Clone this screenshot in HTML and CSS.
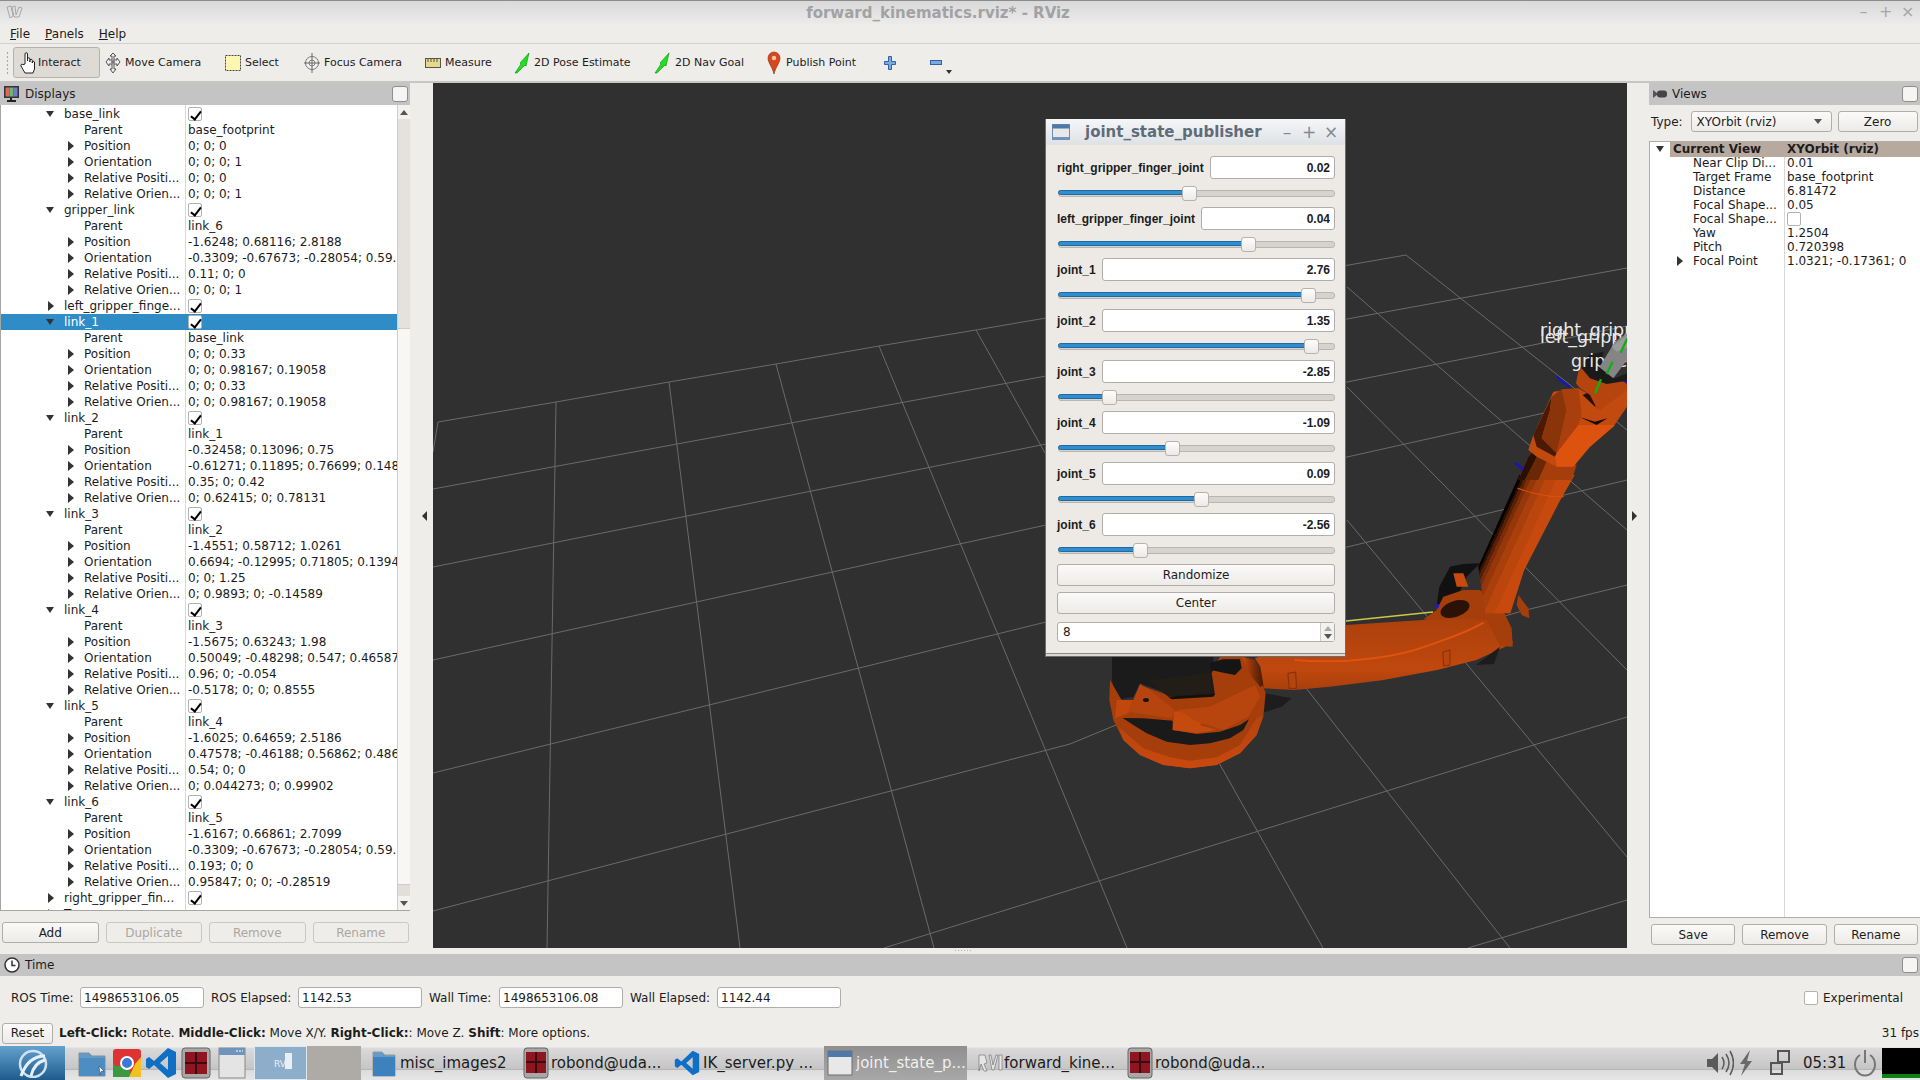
FILE: index.html
```html
<!DOCTYPE html>
<html lang="en">
<head>
<meta charset="utf-8">
<title>forward_kinematics.rviz* - RViz</title>
<link rel="stylesheet" href="styles.css">
</head>
<body>
<div class="screen">
  <header class="titlebar">
    <svg class="app-glyph" width="18" height="14" viewBox="0 0 18 14"><path d="M1 2l4-1 2 10-3 2zM6 2l3-1 1 9 3-8 3 1-3 9h-5z" fill="none" stroke="#a8a8a8"/></svg>
    <span class="title-text">forward_kinematics.rviz* - RViz</span>
    <div class="win-btns"><span>–</span><span>+</span><span>×</span></div>
  </header>
  <nav class="menubar"><span><u>F</u>ile</span><span><u>P</u>anels</span><span><u>H</u>elp</span></nav>
  <div class="toolbar">
    <div class="grip"></div>
    <div class="tool tool-on w-interact">
      <svg width="18" height="24" viewBox="0 0 18 24"><path d="M6 13V3a1.2 1.2 0 0 1 2.5 0v7V8a1.2 1.2 0 0 1 2.4 0v3-1.500a1.200 1.200 0 0 1 2.400 0V12v-1a1.200 1.200 0 0 1 2.200 0v7l-1.500 4H6l-4-7c-.6-1.400 1-2.500 2-1.300z" fill="#fff" stroke="#222"/></svg>
      <span>Interact</span>
    </div>
    <div class="tool w-move">
      <svg width="16" height="22" viewBox="0 0 16 22"><path d="M8 1l3 3H9v4h3V6l3 4-3 4v-2H9v5h2l-3 4-3-4h2v-5H4v2l-3-4 3-4v2h3V4H5z" fill="#eee" stroke="#555"/><circle cx="8" cy="10" r="2" fill="#777"/></svg>
      <span>Move Camera</span>
    </div>
    <div class="tool w-select">
      <svg width="16" height="16" viewBox="0 0 16 16"><rect x=".5" y=".5" width="15" height="15" fill="#fdf6b0" stroke="#444" stroke-dasharray="2 1"/></svg>
      <span>Select</span>
    </div>
    <div class="tool w-focus">
      <svg width="16" height="22" viewBox="0 0 16 22"><circle cx="8" cy="11" r="6.500" fill="#f2f2f2" stroke="#777"/><circle cx="8" cy="11" r="3" fill="none" stroke="#888"/><path d="M8 1v20M0 11h16" stroke="#666"/></svg>
      <span>Focus Camera</span>
    </div>
    <div class="tool w-measure">
      <svg width="16" height="10" viewBox="0 0 16 10"><rect x=".5" y=".5" width="15" height="9" fill="#e8d88a" stroke="#555"/><path d="M3 1v3M6 1v3M9 1v3M12 1v3" stroke="#555"/></svg>
      <span>Measure</span>
    </div>
    <div class="tool w-pose">
      <svg width="16" height="22" viewBox="0 0 16 22"><path d="M1 21l6-9-1-1 9-10-3 13-1-1-8 8z" fill="#1fe01f" stroke="#0a8a0a" stroke-width=".6"/></svg>
      <span>2D Pose Estimate</span>
    </div>
    <div class="tool w-nav">
      <svg width="16" height="22" viewBox="0 0 16 22"><path d="M1 21l6-9-1-1 9-10-3 13-1-1-8 8z" fill="#1fe01f" stroke="#0a8a0a" stroke-width=".6"/></svg>
      <span>2D Nav Goal</span>
    </div>
    <div class="tool w-point">
      <svg width="14" height="24" viewBox="0 0 14 24"><path d="M7 23C5 15 1 12 1 7a6 6 0 0 1 12 0c0 5-4 8-6 16z" fill="#d8461c" stroke="#8a2a10" stroke-width=".6"/><circle cx="7" cy="7" r="2.200" fill="#f6c4a8"/></svg>
      <span>Publish Point</span>
    </div>
    <div class="tool w-plus">
      <svg width="12" height="14" viewBox="0 0 12 14"><path d="M4.500 .5h3v5h4v3h-4v5h-3v-5h-4v-3h4z" fill="#7fa8dc" stroke="#2f62a8"/></svg>
    </div>
    <div class="tool w-minus">
      <svg width="12" height="6" viewBox="0 0 12 6"><rect x=".5" y=".5" width="11" height="4" fill="#7fa8dc" stroke="#2f62a8"/></svg>
      <i class="more-arrow"></i>
    </div>
  </div>

  <main class="workspace">
    <section class="left-dock">
      <div class="dock-head">
        <svg width="18" height="18" viewBox="0 0 18 18"><rect x="1" y="1" width="15" height="12" fill="#333"/><rect x="2.500" y="2.500" width="4" height="9" fill="#d66"/><rect x="6.500" y="2.500" width="4" height="9" fill="#6b6"/><rect x="10.500" y="2.500" width="4" height="9" fill="#77c"/><path d="M8 13v2M4 16h9" stroke="#222" stroke-width="2"/></svg>
        <span>Displays</span>
        <i class="dock-float"></i>
      </div>
      <div class="tree-box">
        <div class="tree">
          <div class="row g"><i class="ad"></i><span class="n">base_link</span><span class="v"><i class="cb on"></i></span></div>
          <div class="row c"><span class="n">Parent</span><span class="v">base_footprint</span></div>
          <div class="row c"><i class="ar"></i><span class="n">Position</span><span class="v">0; 0; 0</span></div>
          <div class="row c"><i class="ar"></i><span class="n">Orientation</span><span class="v">0; 0; 0; 1</span></div>
          <div class="row c"><i class="ar"></i><span class="n">Relative Positi...</span><span class="v">0; 0; 0</span></div>
          <div class="row c"><i class="ar"></i><span class="n">Relative Orien...</span><span class="v">0; 0; 0; 1</span></div>

          <div class="row g"><i class="ad"></i><span class="n">gripper_link</span><span class="v"><i class="cb on"></i></span></div>
          <div class="row c"><span class="n">Parent</span><span class="v">link_6</span></div>
          <div class="row c"><i class="ar"></i><span class="n">Position</span><span class="v">-1.6248; 0.68116; 2.8188</span></div>
          <div class="row c"><i class="ar"></i><span class="n">Orientation</span><span class="v">-0.3309; -0.67673; -0.28054; 0.59...</span></div>
          <div class="row c"><i class="ar"></i><span class="n">Relative Positi...</span><span class="v">0.11; 0; 0</span></div>
          <div class="row c"><i class="ar"></i><span class="n">Relative Orien...</span><span class="v">0; 0; 0; 1</span></div>

          <div class="row g"><i class="ar"></i><span class="n">left_gripper_finge...</span><span class="v"><i class="cb on"></i></span></div>

          <div class="row g sel"><i class="ad"></i><span class="n">link_1</span><span class="v"><i class="cb on"></i></span></div>
          <div class="row c"><span class="n">Parent</span><span class="v">base_link</span></div>
          <div class="row c"><i class="ar"></i><span class="n">Position</span><span class="v">0; 0; 0.33</span></div>
          <div class="row c"><i class="ar"></i><span class="n">Orientation</span><span class="v">0; 0; 0.98167; 0.19058</span></div>
          <div class="row c"><i class="ar"></i><span class="n">Relative Positi...</span><span class="v">0; 0; 0.33</span></div>
          <div class="row c"><i class="ar"></i><span class="n">Relative Orien...</span><span class="v">0; 0; 0.98167; 0.19058</span></div>

          <div class="row g"><i class="ad"></i><span class="n">link_2</span><span class="v"><i class="cb on"></i></span></div>
          <div class="row c"><span class="n">Parent</span><span class="v">link_1</span></div>
          <div class="row c"><i class="ar"></i><span class="n">Position</span><span class="v">-0.32458; 0.13096; 0.75</span></div>
          <div class="row c"><i class="ar"></i><span class="n">Orientation</span><span class="v">-0.61271; 0.11895; 0.76699; 0.148</span></div>
          <div class="row c"><i class="ar"></i><span class="n">Relative Positi...</span><span class="v">0.35; 0; 0.42</span></div>
          <div class="row c"><i class="ar"></i><span class="n">Relative Orien...</span><span class="v">0; 0.62415; 0; 0.78131</span></div>

          <div class="row g"><i class="ad"></i><span class="n">link_3</span><span class="v"><i class="cb on"></i></span></div>
          <div class="row c"><span class="n">Parent</span><span class="v">link_2</span></div>
          <div class="row c"><i class="ar"></i><span class="n">Position</span><span class="v">-1.4551; 0.58712; 1.0261</span></div>
          <div class="row c"><i class="ar"></i><span class="n">Orientation</span><span class="v">0.6694; -0.12995; 0.71805; 0.1394</span></div>
          <div class="row c"><i class="ar"></i><span class="n">Relative Positi...</span><span class="v">0; 0; 1.25</span></div>
          <div class="row c"><i class="ar"></i><span class="n">Relative Orien...</span><span class="v">0; 0.9893; 0; -0.14589</span></div>

          <div class="row g"><i class="ad"></i><span class="n">link_4</span><span class="v"><i class="cb on"></i></span></div>
          <div class="row c"><span class="n">Parent</span><span class="v">link_3</span></div>
          <div class="row c"><i class="ar"></i><span class="n">Position</span><span class="v">-1.5675; 0.63243; 1.98</span></div>
          <div class="row c"><i class="ar"></i><span class="n">Orientation</span><span class="v">0.50049; -0.48298; 0.547; 0.46587</span></div>
          <div class="row c"><i class="ar"></i><span class="n">Relative Positi...</span><span class="v">0.96; 0; -0.054</span></div>
          <div class="row c"><i class="ar"></i><span class="n">Relative Orien...</span><span class="v">-0.5178; 0; 0; 0.8555</span></div>

          <div class="row g"><i class="ad"></i><span class="n">link_5</span><span class="v"><i class="cb on"></i></span></div>
          <div class="row c"><span class="n">Parent</span><span class="v">link_4</span></div>
          <div class="row c"><i class="ar"></i><span class="n">Position</span><span class="v">-1.6025; 0.64659; 2.5186</span></div>
          <div class="row c"><i class="ar"></i><span class="n">Orientation</span><span class="v">0.47578; -0.46188; 0.56862; 0.486</span></div>
          <div class="row c"><i class="ar"></i><span class="n">Relative Positi...</span><span class="v">0.54; 0; 0</span></div>
          <div class="row c"><i class="ar"></i><span class="n">Relative Orien...</span><span class="v">0; 0.044273; 0; 0.99902</span></div>

          <div class="row g"><i class="ad"></i><span class="n">link_6</span><span class="v"><i class="cb on"></i></span></div>
          <div class="row c"><span class="n">Parent</span><span class="v">link_5</span></div>
          <div class="row c"><i class="ar"></i><span class="n">Position</span><span class="v">-1.6167; 0.66861; 2.7099</span></div>
          <div class="row c"><i class="ar"></i><span class="n">Orientation</span><span class="v">-0.3309; -0.67673; -0.28054; 0.59...</span></div>
          <div class="row c"><i class="ar"></i><span class="n">Relative Positi...</span><span class="v">0.193; 0; 0</span></div>
          <div class="row c"><i class="ar"></i><span class="n">Relative Orien...</span><span class="v">0.95847; 0; 0; -0.28519</span></div>

          <div class="row g"><i class="ar"></i><span class="n">right_gripper_fin...</span><span class="v"><i class="cb on"></i></span></div>
          <div class="row g"><i class="ar"></i><span class="n">Tree</span><span class="v"></span></div>
        </div>
        <div class="vscroll">
          <div class="sb-btn"><i class="up"></i></div>
          <div class="sb-a"></div>
          <div class="sb-b"></div>
          <div class="sb-c"></div>
          <div class="sb-btn"><i class="down"></i></div>
        </div>
      </div>
      <div class="dock-btns">
        <button class="btn">Add</button>
        <button class="btn off">Duplicate</button>
        <button class="btn off">Remove</button>
        <button class="btn off">Rename</button>
      </div>
    </section>

    <div class="collapse c-left"><i class="tri-left"></i></div>

    <div class="viewport">
      <svg class="scene" viewBox="433 83 1194 865" width="1194" height="865">
        <defs>
          <linearGradient id="upper" gradientUnits="userSpaceOnUse" x1="1180" y1="650" x2="1294" y2="699">
            <stop offset="0" stop-color="#080302"/><stop offset=".05" stop-color="#080302"/>
            <stop offset=".05" stop-color="#2d1103"/><stop offset=".1" stop-color="#2d1103"/>
            <stop offset=".1" stop-color="#572006"/><stop offset=".17" stop-color="#572006"/>
            <stop offset=".17" stop-color="#7a2d08"/><stop offset=".25" stop-color="#7a2d08"/>
            <stop offset=".25" stop-color="#95370a"/><stop offset=".38" stop-color="#95370a"/>
            <stop offset=".38" stop-color="#a93f0b"/><stop offset=".55" stop-color="#a93f0b"/>
            <stop offset=".55" stop-color="#ba450d"/><stop offset=".78" stop-color="#ba450d"/>
            <stop offset=".78" stop-color="#c8490e"/><stop offset="1" stop-color="#c8490e"/>
          </linearGradient>
          <linearGradient id="lower" gradientUnits="userSpaceOnUse" x1="0" y1="960" x2="0" y2="1170">
            <stop offset="0" stop-color="#ad410c"/><stop offset=".45" stop-color="#b8450d"/>
            <stop offset=".7" stop-color="#c0480d"/><stop offset="1" stop-color="#a83f0c"/>
          </linearGradient>
          <linearGradient id="rim" x1="0" y1="0" x2="0" y2="1">
            <stop offset="0" stop-color="#b5440e"/><stop offset="1" stop-color="#c8490e"/>
          </linearGradient>
          <linearGradient id="strip" x1="0" y1="0" x2="1" y2="0">
            <stop offset="0" stop-color="#c8490e"/><stop offset="1" stop-color="#2e1104"/>
          </linearGradient>
        </defs>
        <g class="grid">
          <polyline points="433,452 438,422 556,402 669,382 776,364 879,346 976,330 1046,318 1406,255"/>
          <polyline points="433,489 1046,376 1347,319 1451,300 1627,268"/>
          <polyline points="433,567 1046,444 1347,382 1523,347 1627,326"/>
          <polyline points="433,660 1046,525 1347,457 1544,413 1627,394"/>
          <polyline points="433,773 1046,622 1347,547 1627,480"/>
          <polyline points="433,911 1070,744 1116,725 1526,610 1627,585"/>
          <polyline points="884,948 1070,890 1358,800 1537,744 1627,717"/>
          <polyline points="1468,948 1627,900"/>
          <polyline points="556,402 547,948"/>
          <polyline points="669,382 740,948"/>
          <polyline points="776,364 934,948"/>
          <polyline points="879,346 1127,948"/>
          <polyline points="976,330 1323,948"/>
          <polyline points="1080,400 1510,948"/>
          <polyline points="1347,520 1627,857"/>
          <polyline points="1347,387 1627,670"/>
          <polyline points="1347,287 1627,530"/>
          <polyline points="1406,255 1627,430"/>
        </g>

        <!-- base disc -->
        <g transform="translate(1100 650) scale(.33333)">
          <path d="M495 130L575 145L545 170L485 190Z" fill="#1d1d1d"/>
          <path d="M36 20H340L345 135L230 140L120 100L100 140L50 150L36 90Z" fill="#1b1b1b"/>
          <path d="M30 90L28 150L40 210L70 270L120 315L190 345L270 355L350 345L420 310L470 255L490 200L497 130L480 80L460 30L430 20H360L335 70L345 135L230 145L120 105L85 185Z" fill="#a53e0b"/>
          <path d="M55 230L130 295L210 322L270 332L350 322L420 285L470 205L490 195L470 255L420 310L350 345L270 355L190 345L120 315L70 270Z" fill="url(#rim)"/>
          <path d="M50 150L100 150L85 190L45 205Z" fill="#c0480d"/>
          <path d="M68 204L130 205L218 212L218 240L290 252L360 245L420 225L447 208L430 240L390 265L330 280L270 285L200 275L140 250L100 225Z" fill="#1a1a1a"/>
          <path d="M120 102L85 185L215 205L224 180L150 120Z" fill="#b5440e"/>
          <ellipse cx="138" cy="150" rx="9" ry="6" fill="#1c1008"/>
          <path d="M222 185L270 180L330 190L300 225L350 240L290 250L218 240Z" fill="#c44a0e"/>
          <path d="M235 180L330 170L465 105L480 140L445 200L370 240L290 215Z" fill="#b8450d"/>
          <path d="M145 90L330 68L336 128L205 140Z" fill="#231d17"/>
          <path d="M205 140L345 132L340 140L215 148Z" fill="#150f0a"/>
          <path d="M330 40L368 28H420L425 55L405 75L370 68L332 60Z" fill="#151515"/>
          <path d="M425 22L465 30L502 92L482 112L455 80Z" fill="url(#strip)"/>
        </g>

        <!-- lower arm -->
        <g transform="translate(1080 300) scale(.35714 .33333)">
          <path d="M490 1075L746 975L960 960L1030 950L1130 935L1170 935L1200 980L1212 1030L1110 1080L1000 1110L850 1140L700 1160L600 1170L515 1165L505 1100Z" fill="url(#lower)"/>
          <path d="M600 1080C760 1095 900 1065 960 1042S1070 1005 1130 968" fill="none" stroke="#de5310" stroke-width="6"/>
          <path d="M582 1120L604 1116L606 1165L586 1165Z" fill="#b5440e" stroke="#6a2807" stroke-width="2"/>
          <path d="M1016 1056L1036 1050L1036 1095L1018 1098Z" fill="#b8450d" stroke="#6a2807" stroke-width="2"/>
        </g>

        <!-- elbow hub -->
        <g transform="translate(1400 540) scale(.33333)">
          <path d="M300 320L282 372L228 375Z" fill="#1c1c1c"/>
          <path d="M118 140L150 80L190 72L240 70L200 110L170 175L110 195Z" fill="#111"/>
          <path d="M160 100L190 100L205 140L170 140Z" fill="#c84a0e"/>
          <path d="M355 165L385 205L388 235L365 225L350 195Z" fill="#a53e0b"/>
          <path d="M70 238L110 210L130 170L190 150L240 150L310 212L335 265L338 320L300 318L260 240L170 235L100 240Z" fill="#a53e0b"/>
          <ellipse cx="165" cy="207" rx="45" ry="24" transform="rotate(-18 165 207)" fill="#2a1206"/>
          <circle cx="112" cy="197" r="6" fill="#1a1ad0"/>
        </g>
        <path class="laser" d="M1346 621L1433 612"/>

        <!-- forearm -->
        <g transform="translate(1080 300) scale(.35714 .33333)">
          <path d="M1115 800L1230 525L1385 525L1340 610L1243 812L1205 940L1135 940Z" fill="url(#upper)"/>
          <path d="M1225 565Q1300 592 1355 590" fill="none" stroke="#d8520f" stroke-width="3"/>
        </g>

        <!-- wrist -->
        <g transform="translate(1500 310) scale(.33333)">
          <path d="M85 440L100 425L230 465L215 510L55 510Z" fill="#a53e0b"/>
          <path d="M85 440L100 425L115 432L75 510H55Z" fill="#2a1004"/>
          <path d="M115 432L145 442L115 510H75Z" fill="#6a2807"/>
          <path d="M85 420L100 375L160 245L235 235L270 255L290 295L340 230L381 222L381 290L340 350L270 410L240 440L220 470L170 470L110 440Z" fill="#c24a0e"/>
          <path d="M100 375L155 260L150 300L125 385L170 430L165 440L110 410Z" fill="#4a1a05"/>
          <path d="M155 260L185 238L200 300L170 430L125 385L150 300Z" fill="#8a340a"/>
          <path d="M185 238L235 235L245 310L235 345L170 430L200 300Z" fill="#a83f0c"/>
          <path d="M235 345L270 345L345 345L270 410L220 470L170 470L165 440L170 430Z" fill="#de5210"/>
          <path d="M240 322L290 345L322 325L285 335Z" fill="#1a0a03"/>
          <path d="M248 255L285 290L300 268L270 245Z" fill="#2a1004"/>
          <path d="M235 185L250 170L300 215L381 205V240L300 300L290 295L270 255L240 235L228 220Z" fill="#b5440e"/>
          <path d="M170 200L210 232M45 458L70 478M370 210L382 218" stroke="#1414d0" stroke-width="7" fill="none"/>
          <path d="M245 175L265 135L310 125L305 175L345 205L381 190V212L320 222L270 205Z" fill="#1a1a1a"/>
        </g>
        <text class="label" x="1540" y="336">right_gripper_finger_joint</text>
        <text class="label" x="1540" y="343">left_gripper_finger_joint</text>
        <text class="label" x="1571" y="367">gripper_link</text>
        <g transform="translate(1500 310) scale(.33333)">
          <path d="M298 172L345 95L381 70V150L340 205Z" fill="#858585"/>
          <path d="M335 110L381 75V112L350 125Z" fill="#9b9b9b"/>
          <path d="M285 250L303 208M320 192L338 155M362 128L382 85" stroke="#10b010" stroke-width="7" fill="none"/>
        </g>
      </svg>
      <i class="vp-grip"></i>
    </div>

    <div class="collapse c-right"><i class="tri-right"></i></div>

    <section class="right-dock">
      <div class="dock-head">
        <svg width="16" height="12" viewBox="0 0 16 12"><path d="M1 2l4 3v2l-4 3z" fill="#555"/><rect x="5" y="2.500" width="10" height="7" rx="3" fill="#444"/></svg>
        <span>Views</span>
        <i class="dock-float"></i>
      </div>
      <div class="type-row">
        <span>Type:</span>
        <div class="combo"><span>XYOrbit (rviz)</span><i class="down"></i></div>
        <button class="btn zero">Zero</button>
      </div>
      <div class="view-tree">
        <div class="vrow head"><i class="ad"></i><b class="vn">Current View</b><b class="vv">XYOrbit (rviz)</b></div>
        <div class="vrow"><span class="vn">Near Clip Di...</span><span class="vv">0.01</span></div>
        <div class="vrow"><span class="vn">Target Frame</span><span class="vv">base_footprint</span></div>
        <div class="vrow"><span class="vn">Distance</span><span class="vv">6.81472</span></div>
        <div class="vrow"><span class="vn">Focal Shape...</span><span class="vv">0.05</span></div>
        <div class="vrow"><span class="vn">Focal Shape...</span><span class="vv"><i class="cb"></i></span></div>
        <div class="vrow"><span class="vn">Yaw</span><span class="vv">1.2504</span></div>
        <div class="vrow"><span class="vn">Pitch</span><span class="vv">0.720398</span></div>
        <div class="vrow"><i class="ar"></i><span class="vn">Focal Point</span><span class="vv">1.0321; -0.17361; 0</span></div>
      </div>
      <div class="view-btns">
        <button class="btn">Save</button>
        <button class="btn">Remove</button>
        <button class="btn">Rename</button>
      </div>
    </section>
  </main>

  <section class="time-panel">
    <div class="dock-head">
      <svg width="18" height="18" viewBox="0 0 18 18"><circle cx="9" cy="9" r="7" fill="#fff" stroke="#333" stroke-width="1.500"/><path d="M9 4.500V9.500H12.500" fill="none" stroke="#333" stroke-width="1.500"/></svg>
      <span>Time</span>
      <i class="dock-float"></i>
    </div>
    <div class="time-row">
      <label class="lab-a">ROS Time:</label><input class="field" value="1498653106.05" readonly>
      <label class="lab-b">ROS Elapsed:</label><input class="field" value="1142.53" readonly>
      <label class="lab-c">Wall Time:</label><input class="field" value="1498653106.08" readonly>
      <label class="lab-b">Wall Elapsed:</label><input class="field" value="1142.44" readonly>
      <div class="spacer"></div>
      <i class="cb"></i><label class="exp">Experimental</label>
    </div>
    <div class="help-row">
      <button class="btn reset">Reset</button>
      <p class="help"><b>Left-Click:</b> Rotate. <b>Middle-Click:</b> Move X/Y. <b>Right-Click:</b>: Move Z. <b>Shift</b>: More options.</p>
      <span class="fps">31 fps</span>
    </div>
  </section>

  <footer class="taskbar">
    <div class="start"><svg width="34" height="30" viewBox="0 0 34 30"><circle cx="17" cy="16" r="13" fill="none" stroke="#cfe2f0" stroke-width="2.500"/><path d="M5 28C10 14 18 8 29 8M15 28c2-9 6-14 14-16" fill="none" stroke="#e6f0f8" stroke-width="3"/></svg></div>
    <div class="launch l-folder"><svg width="30" height="30" viewBox="0 0 30 30"><path d="M2 5h10l3 3h13v20H2z" fill="#5f9ccb" stroke="#8d8d8d"/><rect x="2" y="10" width="26" height="18" fill="#4d8dc2"/><path d="M22 18l5 5-3 .5-1 3z" fill="#fff" stroke="#333" stroke-width=".5"/></svg></div>
    <div class="launch l-chrome"><svg width="28" height="30" viewBox="0 0 28 30"><rect x="0" y="1" width="28" height="28" rx="3" fill="#d33"/><path d="M0 14L8 29H0z" fill="#3a9a3f"/><path d="M0 18l8 11h12L14 18z" fill="#3a9a3f"/><path d="M28 9v20H16l6-13z" fill="#f4c020"/><circle cx="14" cy="15" r="6" fill="#3b78d8" stroke="#fff" stroke-width="2"/></svg></div>
    <div class="launch l-code"><svg width="32" height="32" viewBox="0 0 32 32"><path d="M23 1l8 4v22l-8 4L9 18l-5 4-3-2v-8l3-2 5 4zM23 9l-8 7 8 7z" fill="#0f6fc4"/></svg></div>
    <div class="launch l-term"><svg width="30" height="32" viewBox="0 0 30 32"><rect x="1" y="1" width="28" height="30" rx="3" fill="#a8a8a8" stroke="#666"/><rect x="4" y="5" width="22" height="22" fill="#8f1520"/><path d="M15 5v22M4 16h22" stroke="#3a0a10" stroke-width="2"/></svg></div>
    <div class="launch l-win"><svg width="28" height="32" viewBox="0 0 28 32"><rect x="1" y="1" width="26" height="30" fill="#e4e4e4" stroke="#888"/><rect x="1" y="1" width="26" height="7" fill="#6f95bd"/><path d="M18 4h7" stroke="#fff" stroke-dasharray="2 1"/></svg></div>
    <div class="pager">
      <div class="desk one"><span class="rv">RV</span><i class="mini"></i></div>
      <div class="desk two"></div>
    </div>
    <div class="task t1"><svg width="24" height="28" viewBox="0 0 24 28"><path d="M1 3h9l3 3h10v21H1z" fill="#5f9ccb" stroke="#999"/><rect x="1" y="8" width="22" height="19" fill="#3d82bc"/></svg><span>misc_images2</span></div>
    <div class="task t2"><svg width="26" height="32" viewBox="0 0 26 32"><rect x="1" y="1" width="24" height="30" rx="3" fill="#a8a8a8" stroke="#666"/><rect x="3" y="5" width="20" height="21" fill="#8f1520"/><path d="M13 5v21M3 15h20" stroke="#3a0a10" stroke-width="2"/></svg><span>robond@uda...</span></div>
    <div class="task t3"><svg width="26" height="30" viewBox="0 0 32 32"><path d="M23 1l8 4v22l-8 4L9 18l-5 4-3-2v-8l3-2 5 4zM23 9l-8 7 8 7z" fill="#0f6fc4"/></svg><span>IK_server.py ...</span></div>
    <div class="task t4 active"><svg width="26" height="26" viewBox="0 0 26 26"><rect x="1" y="1" width="24" height="24" fill="#e8e8e8" stroke="#6f6f6f"/><rect x="1" y="1" width="24" height="6" fill="#4e79a8"/></svg><span>joint_state_p...</span></div>
    <div class="task t5"><svg width="26" height="20" viewBox="0 0 26 20"><path d="M2 2h6l2 8-3 1 3 7H7l-3-7-2 7zM12 2h2l2 10 3-10h2l-4 15h-2zM22 2h3v15h-3z" fill="#e6e6e6" stroke="#777" stroke-width=".7"/></svg><span>forward_kine...</span></div>
    <div class="task t6"><svg width="26" height="32" viewBox="0 0 26 32"><rect x="1" y="1" width="24" height="30" rx="3" fill="#a8a8a8" stroke="#666"/><rect x="3" y="5" width="20" height="21" fill="#8f1520"/><path d="M13 5v21M3 15h20" stroke="#3a0a10" stroke-width="2"/></svg><span>robond@uda...</span></div>
    <div class="spacer"></div>
    <div class="tray">
      <svg class="t-speaker" width="28" height="28" viewBox="0 0 28 28"><path d="M1 10h5l6-6v20l-6-6H1z" fill="#5a5a5a"/><path d="M16 8q4 6 0 12M20 5q6 9 0 18M24 2q7 12 0 24" fill="none" stroke="#5a5a5a" stroke-width="1.500"/></svg>
      <svg class="t-bolt" width="18" height="28" viewBox="0 0 18 28"><path d="M13 1L3 15h5L4 27l11-15h-5z" fill="#6a6a6a"/></svg>
      <svg class="t-net" width="20" height="26" viewBox="0 0 20 26"><rect x="8" y="1" width="11" height="11" fill="none" stroke="#555" stroke-width="2"/><rect x="1" y="13" width="11" height="11" fill="none" stroke="#555" stroke-width="2"/></svg>
      <span class="clock">05:31</span>
      <svg class="t-power" width="24" height="28" viewBox="0 0 24 28"><path d="M7 6a10 11 0 1 0 10 0" fill="none" stroke="#777" stroke-width="2"/><path d="M12 1v13" stroke="#777" stroke-width="2"/></svg>
      <div class="monitor"><i></i></div>
    </div>
  </footer>

  <aside class="dialog">
    <div class="dlg-title">
      <svg width="18" height="16" viewBox="0 0 18 16"><rect x=".5" y=".5" width="17" height="15" fill="#e8e8e8" stroke="#6f8db0"/><rect x=".5" y=".5" width="17" height="4" fill="#4e79a8"/><rect x=".5" y="13" width="17" height="2.500" fill="#6f95bd"/></svg>
      <span class="dlg-name">joint_state_publisher</span>
      <div class="dlg-btns"><span>–</span><span>+</span><span>×</span></div>
    </div>
    <div class="dlg-body">
      <div class="joint"><label>right_gripper_finger_joint</label><input class="jv" value="0.02" readonly></div>
      <div class="slider"><i class="fill" style="width:133px"></i></div>
      <div class="joint"><label>left_gripper_finger_joint</label><input class="jv" value="0.04" readonly></div>
      <div class="slider"><i class="fill" style="width:192px"></i></div>
      <div class="joint"><label>joint_1</label><input class="jv" value="2.76" readonly></div>
      <div class="slider"><i class="fill" style="width:252px"></i></div>
      <div class="joint"><label>joint_2</label><input class="jv" value="1.35" readonly></div>
      <div class="slider"><i class="fill" style="width:255px"></i></div>
      <div class="joint"><label>joint_3</label><input class="jv" value="-2.85" readonly></div>
      <div class="slider"><i class="fill" style="width:53px"></i></div>
      <div class="joint"><label>joint_4</label><input class="jv" value="-1.09" readonly></div>
      <div class="slider"><i class="fill" style="width:116px"></i></div>
      <div class="joint"><label>joint_5</label><input class="jv" value="0.09" readonly></div>
      <div class="slider"><i class="fill" style="width:145px"></i></div>
      <div class="joint"><label>joint_6</label><input class="jv" value="-2.56" readonly></div>
      <div class="slider"><i class="fill" style="width:84px"></i></div>
      <button class="btn wide">Randomize</button>
      <button class="btn wide">Center</button>
      <div class="spin"><span>8</span><div class="spin-arrows"><i class="up"></i><i class="down"></i></div></div>
    </div>
    <div class="dlg-foot"></div>
  </aside>
</div>
</body>
</html>
```
FILE: styles.css
```css
* { box-sizing: border-box; }
html, body { margin: 0; padding: 0; }
body { width: 1920px; height: 1080px; overflow: hidden; background: #efede9; font: 12px/16px "DejaVu Sans", sans-serif; color: #1c1c1c; }
.screen { position: relative; width: 1920px; height: 1080px; display: flex; flex-direction: column; overflow: hidden; }
i { display: block; font-style: normal; }
svg { display: block; flex: none; }

.titlebar { height: 25px; flex: none; display: flex; align-items: center; justify-content: center; position: relative; border-top: 1px solid #8c8c8c; background: linear-gradient(#d9d9d9, #ececec); }
.app-glyph { position: absolute; left: 6px; top: 4px; }
.title-text { font-weight: bold; font-size: 15px; color: #a2a2a2; margin-left: -44px; }
.win-btns { position: absolute; right: 6px; top: 1px; display: flex; gap: 9px; color: #a6a6a6; font-size: 16px; line-height: 20px; }
.win-btns span { width: 13px; text-align: center; }

.menubar { height: 18px; flex: none; display: flex; gap: 15px; padding-left: 10px; align-items: center; background: #efede9; }

.toolbar { height: 40px; flex: none; display: flex; align-items: center; padding-left: 6px; background: #efede9; border-top: 1px solid #d5d2cd; border-bottom: 2px solid #c8c6c2; font-size: 11px; }
.grip { width: 3px; height: 24px; margin-right: 4px; background: radial-gradient(circle, #aaa 40%, transparent 45%) 0 0 / 3px 4px; }
.tool { display: flex; align-items: center; gap: 4px; height: 31px; flex: none; position: relative; }
.tool-on { background: #dedbd6; border: 1px solid #b4b2ae; border-radius: 3px; padding-left: 5px; gap: 1px; }
.w-interact { width: 87px; margin-right: 5px; }
.w-move { width: 120px; }
.w-select { width: 79px; }
.w-focus { width: 121px; }
.w-measure { width: 89px; }
.w-pose { width: 140px; }
.w-nav { width: 113px; gap: 5px; }
.w-point { width: 117px; gap: 5px; }
.w-plus { width: 46px; }
.w-minus { width: 30px; }
.more-arrow { position: absolute; left: 16px; top: 23px; border: 3.500px solid transparent; border-top: 4px solid #333; border-bottom: 0; }

.workspace { flex: 1; display: flex; min-height: 0; }
.dock-head { height: 22px; flex: none; display: flex; align-items: center; gap: 4px; padding-left: 3px; background: #c4c4c4; position: relative; }
.dock-float { position: absolute; right: 2px; top: 3px; width: 16px; height: 16px; border: 1px solid #8e8e8e; border-radius: 3px; background: #f6f5f3; }

.left-dock { width: 410px; flex: none; display: flex; flex-direction: column; }
.tree-box { height: 806px; flex: none; display: flex; border-left: 1px solid #a8a6a2; border-bottom: 1px solid #a8a6a2; background: #fff; }
.tree { width: 396px; flex: none; overflow: hidden; padding-top: 1px; background: linear-gradient(#d8d8d8, #d8d8d8) 184px 0 / 1px 100% no-repeat #fff; }
.row { height: 16px; display: flex; align-items: center; position: relative; white-space: nowrap; }
.row .n { position: absolute; white-space: nowrap; }
.row.g .n { left: 63px; }
.row.c .n { left: 83px; }
.row .v { position: absolute; left: 187px; width: 209px; overflow: hidden; white-space: nowrap; }
.row.sel { background: #308cc6; }
.row.sel .n { color: #fff; }
.row.g > .ad { position: absolute; left: 45px; top: 5px; }
.row.c > .ar { position: absolute; left: 67px; top: 3px; }
.ad { width: 0; height: 0; border-left: 4.500px solid transparent; border-right: 4.500px solid transparent; border-top: 6px solid #333; }
.ar { width: 0; height: 0; border-top: 5px solid transparent; border-bottom: 5px solid transparent; border-left: 6px solid #333; }
.row.g > .ar { position: absolute; left: 47px; top: 3px; }
.cb { width: 14px; height: 14px; border: 1px solid #b4b2ae; border-radius: 2px; background: #fff; position: relative; flex: none; }
.cb.on::after { content: ""; position: absolute; left: 4px; top: 1px; width: 4px; height: 9px; border-right: 2px solid #000; border-bottom: 2px solid #000; transform: rotate(38deg); }

.vscroll { flex: 1; display: flex; flex-direction: column; border-left: 1px solid #d0ceca; }
.sb-btn { height: 14px; flex: none; display: flex; align-items: center; justify-content: center; background: #f4f2ef; }
.sb-a { height: 210px; flex: none; background: #e5e2de; border-bottom: 1px solid #cfccc8; }
.sb-b { flex: 1; background: #f8f7f5; }
.sb-c { height: 12px; flex: none; background: #e2dfda; border-top: 1px solid #cfccc8; }
.up { width: 0; height: 0; border-left: 4px solid transparent; border-right: 4px solid transparent; border-bottom: 5px solid #555; }
.down { width: 0; height: 0; border-left: 4px solid transparent; border-right: 4px solid transparent; border-top: 5px solid #555; }

.btn { font: 12px/16px "DejaVu Sans", sans-serif; color: #1c1c1c; background: linear-gradient(#fbfaf9, #ecebe8); border: 1px solid #b0aeaa; border-radius: 3px; padding: 0; height: 21px; }
.btn.off { color: #a9a7a3; background: #efede9; border-color: #cac8c4; }
.dock-btns { display: flex; gap: 7px; padding: 11px 1px 0 2px; }
.dock-btns .btn { flex: 1; }

.collapse { flex: none; display: flex; align-items: center; padding-bottom: 6px; }
.c-left { width: 23px; padding-left: 12px; }
.c-right { width: 22px; padding-left: 5px; }
.tri-left { width: 0; height: 0; border-top: 5px solid transparent; border-bottom: 5px solid transparent; border-right: 5px solid #333; }
.tri-right { width: 0; height: 0; border-top: 5px solid transparent; border-bottom: 5px solid transparent; border-left: 5px solid #333; }

.viewport { width: 1194px; height: 865px; flex: none; position: relative; background: #303030; }
.scene { position: absolute; inset: 0; overflow: hidden; }
.grid polyline { fill: none; stroke: #6a6a6a; stroke-width: 1; }
.laser { fill: none; stroke: #c8c84a; stroke-width: 1.500; }
.label { font: 17.500px "DejaVu Sans", sans-serif; fill: #e8e8e8; }
.vp-grip { position: absolute; left: 522px; top: 867px; width: 17px; height: 1px; background: repeating-linear-gradient(90deg, #b0b0b0 0 1px, transparent 1px 3px); }

.right-dock { flex: 1; min-width: 0; display: flex; flex-direction: column; }
.type-row { display: flex; align-items: center; gap: 8px; padding: 6px 2px 9px 2px; height: 36px; flex: none; }
.combo { width: 141px; height: 21px; flex: none; display: flex; align-items: center; justify-content: space-between; padding: 0 9px 0 5px; border: 1px solid #b0aeaa; border-radius: 3px; background: linear-gradient(#fbfaf9, #ecebe8); }
.btn.zero { width: 80px; margin-left: -2px; }
.view-tree { height: 777px; flex: none; border: 1px solid #b0aeaa; border-right: 0; background: linear-gradient(#d8d8d8, #d8d8d8) 134px 0 / 1px 100% no-repeat #fff; }
.vrow { height: 14px; line-height: 14px; position: relative; white-space: nowrap; }
.vrow .vn { position: absolute; left: 43px; }
.vrow .vv { position: absolute; left: 137px; }
.vrow > .ad { position: absolute; left: 6px; top: 4px; }
.vrow > .ar { position: absolute; left: 27px; top: 2px; }
.vrow.head { height: 15px; margin-bottom: -1px; line-height: 15px; background: linear-gradient(90deg, #fff 20px, #b8a99f 20px); }
.vrow.head .vn { left: 23px; }
.view-btns { display: flex; gap: 7px; padding: 6px 2px 0 2px; }
.view-btns .btn { flex: 1; }

.time-panel { height: 92px; flex: none; display: flex; flex-direction: column; }
.time-row { display: flex; align-items: center; height: 21px; margin-top: 11px; padding: 0 17px 0 11px; flex: none; }
.lab-a { width: 69px; flex: none; }
.lab-b { width: 87px; flex: none; }
.lab-c { width: 70px; flex: none; }
.field { width: 124px; height: 21px; flex: none; padding: 0 3px; margin-right: 7px; font: 12px "DejaVu Sans", sans-serif; color: #1c1c1c; border: 1px solid #b0aeaa; border-radius: 3px; background: #fff; outline: none; }
.spacer { flex: 1; }
.time-row .cb { margin-right: 5px; }
.help-row { display: flex; align-items: center; height: 20px; margin-top: 15px; padding-left: 2px; flex: none; }
.btn.reset { width: 51px; height: 21px; }
.help { margin: 0 0 0 6px; flex: 1; }
.fps { margin-right: 1px; }

.taskbar { height: 34px; flex: none; display: flex; align-items: center; background: linear-gradient(#f3f3f3 0, #d9d9d9 8%, #c6c6c6 66%, #a8a8a8 68%, #dcdcdc 72%, #e6e6e6 100%); font-size: 15px; }
.start { width: 65px; height: 34px; flex: none; display: flex; align-items: center; justify-content: center; background: linear-gradient(#63a2cf, #1f5c8e); }
.launch { flex: none; }
.l-folder { margin-left: 12px; }
.l-chrome { margin-left: 6px; }
.l-code { margin-left: 4px; }
.l-term { margin-left: 4px; }
.l-win { margin-left: 7px; }
.pager { display: flex; margin-left: 8px; height: 34px; flex: none; }
.desk { width: 53px; height: 34px; position: relative; }
.desk.one { background: #8daecb; border: 1px solid #dfe8f0; }
.desk.two { width: 54px; background: #aeaba6; }
.rv { position: absolute; left: 19px; top: 9px; font-size: 9px; color: #eee; }
.mini { position: absolute; left: 30px; top: 6px; width: 7px; height: 16px; background: #e8eef4; }
.task { display: flex; align-items: center; gap: 3px; height: 34px; flex: none; white-space: nowrap; position: relative; }
.t1 { margin-left: 11px; width: 151px; gap: 4px; }
.t2 { width: 151px; gap: 2px; }
.t3 { width: 150px; gap: 3px; }
.t4 { width: 143px; padding-left: 3px; gap: 3px; }
.t4.active { background: linear-gradient(#8f8f8f, #a8a8a8); color: #f0f0f0; }
.t5 { margin-left: 10px; width: 150px; gap: 1px; }
.t6 { width: 150px; gap: 2px; }
.tray { display: flex; align-items: center; height: 34px; flex: none; }
.t-bolt { margin-left: 3px; }
.t-net { margin-left: 15px; }
.clock { margin-left: 13px; width: 41px; font-size: 15px; }
.t-power { margin-left: 9px; }
.monitor { width: 38px; height: 30px; margin-left: 5px; background: #000; display: flex; align-items: flex-end; }
.monitor i { width: 100%; height: 4px; background: #0f7f1a; }

.dialog { position: absolute; left: 1045px; top: 119px; width: 301px; height: 538px; display: flex; flex-direction: column; background: #edeae6; border: 1px solid #6d6d6d; border-top: 0; }
.dlg-title { height: 26px; flex: none; display: flex; align-items: center; padding-left: 6px; position: relative; background: linear-gradient(#f4f6f8, #dfe2e5); }
.dlg-name { margin-left: 15px; font-size: 15px; font-weight: bold; color: #5f6c78; }
.dlg-btns { position: absolute; right: 7px; top: 3px; display: flex; gap: 8px; color: #808a94; font-size: 17px; line-height: 20px; }
.dlg-btns span { width: 14px; text-align: center; }
.dlg-body { flex: 1; padding: 11px 10px 0 11px; display: flex; flex-direction: column; }
.joint { display: flex; align-items: center; gap: 6px; height: 23px; flex: none; font: bold 12px "Liberation Sans", sans-serif; }
.joint label { flex: none; }
.jv { flex: 1; min-width: 0; height: 23px; padding: 0 4px; text-align: right; font: bold 12px "Liberation Sans", sans-serif; color: #1c1c1c; border: 1px solid #b0aeaa; border-radius: 3px; background: #fff; outline: none; }
.slider { height: 28px; flex: none; position: relative; }
.slider::before { content: ""; position: absolute; left: 1px; right: 0; top: 11px; height: 5px; background: #d6d3cf; border: 1px solid #b8b6b2; border-radius: 3px; }
.fill { position: absolute; left: 1px; top: 11px; height: 5px; background: #2f8dd0; border: 1px solid #1f6a9f; border-radius: 3px 0 0 3px; }
.fill::after { content: ""; position: absolute; right: -7px; top: -5px; width: 13px; height: 13px; background: linear-gradient(#fdfdfc, #eceae7); border: 1px solid #b4b2ae; border-radius: 3px; }
.btn.wide { width: 100%; height: 22px; flex: none; }
.btn.wide + .btn.wide { margin-top: 6px; }
.spin { height: 20px; flex: none; margin-top: 8px; display: flex; align-items: center; justify-content: space-between; padding-left: 5px; border: 1px solid #b0aeaa; border-radius: 3px; background: #fff; }
.spin-arrows { width: 14px; height: 18px; flex: none; display: flex; flex-direction: column; align-items: center; justify-content: center; gap: 3px; border-left: 1px solid #cfcdc9; background: #f4f2ef; }
.spin-arrows .up { border-bottom-color: #aaa; }
.dlg-foot { height: 3px; flex: none; background: #dbd9d5; border-top: 1px solid #8c8a86; }
```
